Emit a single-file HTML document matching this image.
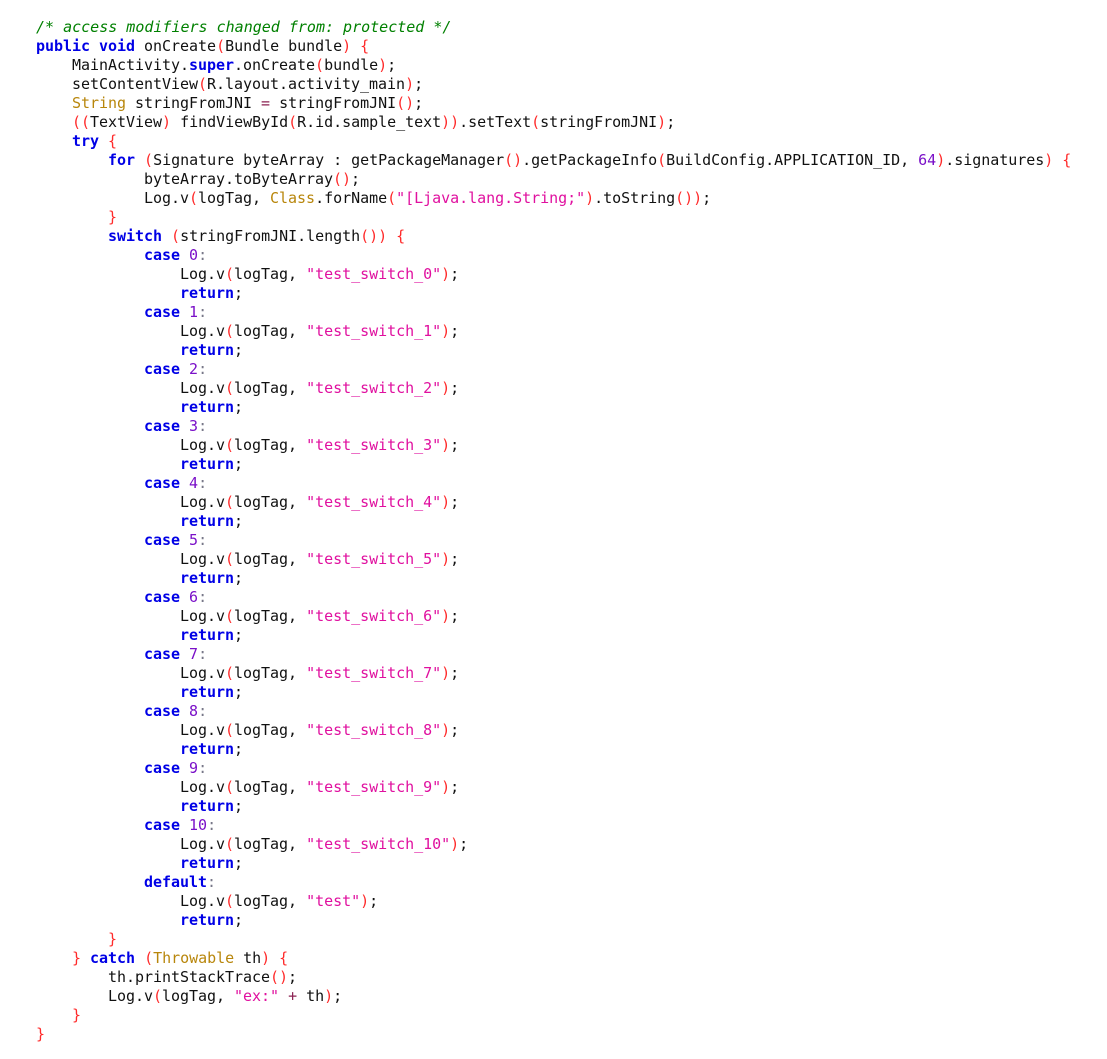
<!DOCTYPE html>
<html>
<head>
<meta charset="utf-8">
<style>
html,body{margin:0;padding:0;background:#fff;width:1107px;height:1059px;overflow:hidden}
pre{position:absolute;left:36px;top:18px;margin:0;font-family:"DejaVu Sans Mono","Liberation Mono",monospace;font-size:15px;letter-spacing:-0.03px;line-height:19px;color:#111;white-space:pre}
i{font-style:normal;color:#ff2a2a}
b{font-weight:bold;color:#0000e6}
em{font-style:italic;color:#008000;letter-spacing:0}
u{text-decoration:none;color:#b8860b}
s{text-decoration:none;color:#e0109f}
q{quotes:none;color:#7a10c8}
q:before,q:after{content:none}
a{color:#8b2252}
small{font-size:inherit;color:#778}
</style>
</head>
<body>
<pre><em>/* access modifiers changed from: protected */</em>
<b>public</b> <b>void</b> onCreate<i>(</i>Bundle bundle<i>)</i> <i>{</i>
    MainActivity.<b>super</b>.onCreate<i>(</i>bundle<i>)</i>;
    setContentView<i>(</i>R.layout.activity_main<i>)</i>;
    <u>String</u> stringFromJNI <a>=</a> stringFromJNI<i>()</i>;
    <i>((</i>TextView<i>)</i> findViewById<i>(</i>R.id.sample_text<i>))</i>.setText<i>(</i>stringFromJNI<i>)</i>;
    <b>try</b> <i>{</i>
        <b>for</b> <i>(</i>Signature byteArray : getPackageManager<i>()</i>.getPackageInfo<i>(</i>BuildConfig.APPLICATION_ID, <q>64</q><i>)</i>.signatures<i>)</i> <i>{</i>
            byteArray.toByteArray<i>()</i>;
            Log.v<i>(</i>logTag, <u>Class</u>.forName<i>(</i><s>"[Ljava.lang.String;"</s><i>)</i>.toString<i>())</i>;
        <i>}</i>
        <b>switch</b> <i>(</i>stringFromJNI.length<i>())</i> <i>{</i>
            <b>case</b> <q>0</q><small>:</small>
                Log.v<i>(</i>logTag, <s>"test_switch_0"</s><i>)</i>;
                <b>return</b>;
            <b>case</b> <q>1</q><small>:</small>
                Log.v<i>(</i>logTag, <s>"test_switch_1"</s><i>)</i>;
                <b>return</b>;
            <b>case</b> <q>2</q><small>:</small>
                Log.v<i>(</i>logTag, <s>"test_switch_2"</s><i>)</i>;
                <b>return</b>;
            <b>case</b> <q>3</q><small>:</small>
                Log.v<i>(</i>logTag, <s>"test_switch_3"</s><i>)</i>;
                <b>return</b>;
            <b>case</b> <q>4</q><small>:</small>
                Log.v<i>(</i>logTag, <s>"test_switch_4"</s><i>)</i>;
                <b>return</b>;
            <b>case</b> <q>5</q><small>:</small>
                Log.v<i>(</i>logTag, <s>"test_switch_5"</s><i>)</i>;
                <b>return</b>;
            <b>case</b> <q>6</q><small>:</small>
                Log.v<i>(</i>logTag, <s>"test_switch_6"</s><i>)</i>;
                <b>return</b>;
            <b>case</b> <q>7</q><small>:</small>
                Log.v<i>(</i>logTag, <s>"test_switch_7"</s><i>)</i>;
                <b>return</b>;
            <b>case</b> <q>8</q><small>:</small>
                Log.v<i>(</i>logTag, <s>"test_switch_8"</s><i>)</i>;
                <b>return</b>;
            <b>case</b> <q>9</q><small>:</small>
                Log.v<i>(</i>logTag, <s>"test_switch_9"</s><i>)</i>;
                <b>return</b>;
            <b>case</b> <q>10</q><small>:</small>
                Log.v<i>(</i>logTag, <s>"test_switch_10"</s><i>)</i>;
                <b>return</b>;
            <b>default</b><small>:</small>
                Log.v<i>(</i>logTag, <s>"test"</s><i>)</i>;
                <b>return</b>;
        <i>}</i>
    <i>}</i> <b>catch</b> <i>(</i><u>Throwable</u> th<i>)</i> <i>{</i>
        th.printStackTrace<i>()</i>;
        Log.v<i>(</i>logTag, <s>"ex:"</s> <a>+</a> th<i>)</i>;
    <i>}</i>
<i>}</i></pre>
</body>
</html>
